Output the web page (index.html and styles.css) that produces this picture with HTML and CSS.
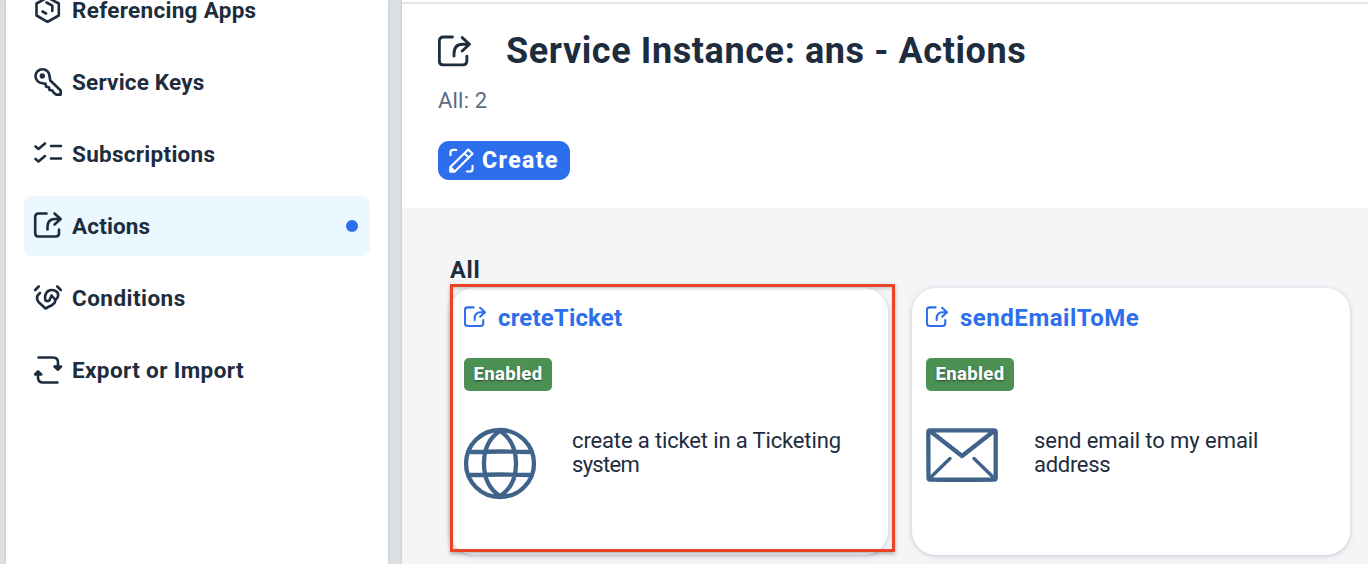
FILE: index.html
```html
<!DOCTYPE html>
<html lang="en">
<head>
<meta charset="utf-8">
<title>Service Instance: ans - Actions</title>
<link rel="stylesheet" href="styles.css">
</head>
<body>
<svg class="defs" width="0" height="0" aria-hidden="true">
  <symbol id="share" viewBox="0 0 32 32">
    <path d="M14 2H5.500Q1.300 2 1.300 6V25Q1.300 29 5.500 29H24Q28 29 28 25V20.500M15.500 20.500V18.500Q15.500 9 24 9H30M23.500 2.500L30.500 9L23.500 15.500"/>
  </symbol>
</svg>
<div class="app">
  <nav class="sidebar">
    <ul class="nav">
      <li class="nav-item"><svg class="nav-icon" viewBox="0 0 28 28"><path d="M2.500 7.500L13.500 1.500L24.800 7.500V19.500L13.500 25.800L2.500 19.500ZM12.500 6.500L18.300 9.700V15M8.500 15.500L12 17.500"/></svg><span class="fit-apps">Referencing Apps</span></li>
      <li class="nav-item"><svg class="nav-icon" viewBox="0 0 28 28"><path d="M15.500 8.200A7 7 0 1 0 8.500 15.200L11.500 15.800L12 18.500L15 19.500L15.500 22L18.500 22.500L19.500 24.500L22 26.600H26.700V22.500L16.300 12.500Z"/><circle class="solid" cx="8.300" cy="8" r="2.700"/></svg><span class="fit-keys">Service Keys</span></li>
      <li class="nav-item"><svg class="nav-icon" viewBox="0 0 28 28"><path d="M1.500 6.500L4.500 9L11 3.500M1.500 19L4.500 21.500L11 16M17 6H27M17 18.500H27"/></svg><span class="fit-subs">Subscriptions</span></li>
      <li class="nav-item selected"><svg class="nav-icon" viewBox="0 0 28 28"><path d="M12.500 1.500H4.500Q1.200 1.500 1.200 4.800V21.200Q1.200 24.500 4.500 24.500H21.700Q25 24.500 25 21.200V17.500M13.500 17.500V15Q13.500 7 21 7H26.500M20.500 1.500L26.700 7L20.500 12.500"/></svg><span class="fit-act">Actions</span><i class="dot"></i></li>
      <li class="nav-item"><svg class="nav-icon" viewBox="0 0 28 28"><path d="M1.200 6L4.700 2.500M26.800 6L23.300 2.500M6 9C2.200 12 2.200 15 4.500 18L11.500 24.500L14.500 22.800L17.500 21.500L20.500 19L21.500 16M11.500 16.500C10 11 12.500 6.300 17.500 6C23 5.800 25.500 10 23.500 13.500L21.500 16L17.500 11.500L15.500 16.200Q13.500 18 11.500 16.500"/></svg><span class="fit-cond">Conditions</span></li>
      <li class="nav-item"><svg class="nav-icon" viewBox="0 0 28 28"><path d="M4.500 1.500H19Q24 1.500 24 6.500V11.500M20.500 10.500L24 13.700L27 10.500ZM23.500 26.500H9Q4 26.500 4 21.500V17M1.200 18.500L4 15.500L7.300 18.500Z"/></svg><span class="fit-exp">Export or Import</span></li>
    </ul>
  </nav>
  <main class="main">
    <header class="header">
      <div class="title-row">
        <svg class="title-icon"><use href="#share"/></svg>
        <h1 class="title">Service Instance: ans - Actions</h1>
      </div>
      <p class="count">All: 2</p>
      <button class="create"><svg class="edit-icon" viewBox="0 0 26 26"><path d="M1.500 7.500V5Q1.500 2 4.500 2H7.500M18.500 24.500H21.500Q24.500 24.500 24.500 21.500V18.500M1.500 24.500V19.800L20 1.500L24.500 6L6 24.500ZM16 5.500L20.500 10"/><path class="tip" d="M1.500 20V24.500H6Z"/></svg><span>Create</span></button>
    </header>
    <section class="content">
      <h2 class="group">All</h2>
      <div class="cards">
        <article class="card">
          <h3 class="card-title"><svg class="card-icon"><use href="#share"/></svg><span class="fit-ticket">creteTicket</span></h3>
          <span class="badge">Enabled</span>
          <div class="detail">
            <svg class="picture" viewBox="0 0 72 72"><path d="M36 2A34 33.500 0 1 1 36 69A34 33.500 0 1 1 36 2ZM36 3Q20 13 20 35.500T36 68Q52 58 52 35.500T36 3M7 24Q36 23 65 24M6 47Q36 46 66 47"/></svg>
            <p class="desc">create a ticket in a Ticketing<br><span class="tight">system</span></p>
          </div>
        </article>
        <article class="card">
          <h3 class="card-title"><svg class="card-icon"><use href="#share"/></svg><span class="fit-email">sendEmailToMe</span></h3>
          <span class="badge">Enabled</span>
          <div class="detail">
            <svg class="picture" viewBox="0 0 72 72"><path d="M4 2.300H68Q69.700 2.300 69.700 4V50Q69.700 51.500 68 51.500Q36 52 4 51.500Q2.500 51.500 2.500 50L2.300 4Q2.300 2.300 4 2.300ZM4 3L36 28L68 3"/><path class="fold" d="M4 50L24 30.500M68 50L48 30.500"/></svg>
            <p class="desc fit-mail">send email to my email<br><span class="snug">address</span></p>
          </div>
        </article>
        <div class="highlight"></div>
      </div>
    </section>
  </main>
</div>
</body>
</html>
```
FILE: styles.css
```css
* { box-sizing: border-box; }
body { margin: 0; font-family: Roboto, "Liberation Sans", sans-serif; color: #1d2d3e; background: #dce0e4; }
h1, h2, h3, p, ul { margin: 0; padding: 0; }
svg { fill: none; stroke: currentColor; stroke-width: 2.6; stroke-linecap: round; stroke-linejoin: round; flex: none; overflow: visible; }
.defs { display: none; }
.app { height: 564px; display: grid; grid-template-columns: 382px 1fr; column-gap: 14px; padding-left: 6px; overflow: hidden; }

.sidebar { background: #fff; box-shadow: 0 0 3px #b8bec4; padding: 0 18px; }
.nav { list-style: none; display: flex; flex-direction: column; gap: 12px; margin-top: -20px; }
.nav-item { height: 60px; display: flex; align-items: center; gap: 10px; padding: 0 12px 0 10px; border-radius: 8px; font-size: 22.5px; line-height: 20px; font-weight: 700; white-space: nowrap; }
.nav-item.selected { background: #ebf8ff; }
.nav-icon { width: 28px; height: 28px; }
.solid { fill: currentColor; stroke: none; }
.dot { width: 12px; height: 12px; border-radius: 50%; background: #2c6eec; margin-left: auto; }
.fit-apps { letter-spacing: .3px; }
.fit-keys { letter-spacing: .2px; }
.fit-subs { letter-spacing: .28px; }
.fit-act { letter-spacing: .15px; }
.fit-cond { letter-spacing: .46px; }
.fit-exp { letter-spacing: .38px; }

.main { display: flex; flex-direction: column; background: #f4f5f7; box-shadow: 0 0 3px #b8bec4; }
.header { height: 208px; background: #fff linear-gradient(#fff 2px, #e4e4e4 2px, #e4e4e4 4px, #fff 4px); padding: 28px 36px 0; display: flex; flex-direction: column; align-items: flex-start; }
.title-row { display: flex; align-items: center; gap: 35px; height: 46px; }
.title-icon { width: 33px; height: 33px; stroke-width: 2.8; }
.title { font-size: 36px; line-height: 46px; font-weight: 700; letter-spacing: .6px; white-space: nowrap; }
.count { margin-top: 14px; font-size: 22px; line-height: 26px; letter-spacing: .2px; color: #5b6b80; }
.create { margin-top: 27px; width: 132px; height: 39px; border: 0; border-radius: 11px; background: #2c6eec; color: #fff; font: 800 23px/39px Roboto, sans-serif; letter-spacing: 1.4px; padding: 0 0 0 11px; display: flex; align-items: center; gap: 8px; }
.edit-icon { width: 25px; height: 25px; stroke-width: 2.2; }
.tip { fill: currentColor; }

.content { padding: 48px 18px 0 48px; }
.group { font-size: 23.5px; line-height: 28px; letter-spacing: .8px; }
.cards { position: relative; display: grid; grid-template-columns: 438px 438px; gap: 24px; margin-top: 4px; }
.card { height: 267px; background: #fff; border-radius: 24px; padding: 14px; box-shadow: 0 1px 5px rgba(70, 85, 105, .28); display: flex; flex-direction: column; align-items: flex-start; }
.card-title { display: flex; align-items: center; gap: 12px; height: 30px; font-size: 24px; color: #2c6eec; }
.card-title span { padding-top: 2px; }
.fit-ticket { letter-spacing: .15px; }
.fit-email { letter-spacing: .53px; }
.card-icon { width: 22px; height: 22px; stroke-width: 3; }
.badge { margin-top: 26px; width: 88px; height: 33px; line-height: 32px; border-radius: 5px; text-align: center; background: #4c9054; color: #fff; font-size: 18.5px; font-weight: 800; letter-spacing: .35px; text-shadow: 0 1px 2px #284a2c; }
.detail { margin-top: 37px; display: flex; gap: 36px; align-items: flex-start; }
.picture { width: 72px; height: 72px; color: #40638b; stroke-width: 4.3; }
.fold { stroke-width: 3.4; }
.desc { padding-top: 1px; font-size: 22px; line-height: 24px; letter-spacing: -.14px; white-space: nowrap; }
.fit-mail { letter-spacing: -.07px; }
.tight { letter-spacing: -.7px; }
.snug { letter-spacing: -.3px; }
.highlight { position: absolute; left: 0; top: -4px; width: 445px; height: 268px; border: 3px solid #ec4326; box-shadow: 0 2px 4px rgba(0, 0, 0, .3), inset 0 2px 3px rgba(0, 0, 0, .15); }
```
